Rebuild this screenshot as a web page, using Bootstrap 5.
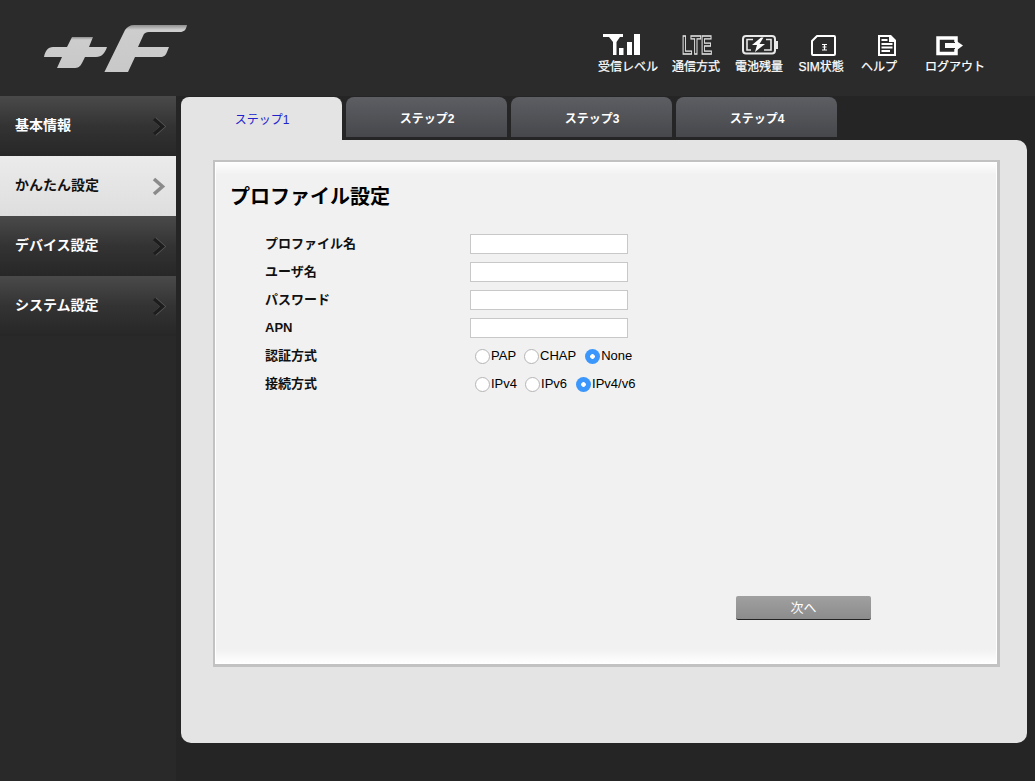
<!DOCTYPE html>
<html lang="ja">
<head>
<meta charset="utf-8">
<title>+F</title>
<link href="https://cdn.jsdelivr.net/npm/bootstrap@5.3.0/dist/css/bootstrap.min.css" rel="stylesheet">
<style>
html,body{height:100%;overflow:hidden}
body{background:#252525;font-family:"Liberation Sans","Noto Sans CJK JP",sans-serif;color:#000;font-size:13px}
.topbar{height:96px;background:#2b2b2b;padding-left:40px;padding-top:20px}
.logo{width:152px;height:52px;display:block}
.status-set{margin-left:406px;margin-top:12px;color:#fff}
.status-item{display:flex;flex-direction:column;align-items:center;font-size:12px;font-weight:400;line-height:16px;color:#fff;-webkit-text-stroke:.25px #fff;text-decoration:none}
.status-item svg{display:block;height:26px;margin-bottom:1px;overflow:visible}
.lte-icon{filter:grayscale(1)}
.lte-mark{font-family:"Liberation Sans",sans-serif;font-size:26px;font-weight:700;fill:#2b2b2b;stroke:#e4e4e4;stroke-width:1.400px;-webkit-text-stroke:0}
.s-gap14{margin-left:14px}.s-gap15{margin-left:15px}.s-gap17{margin-left:17px}.s-gap28{margin-left:28px}
.shell{height:685px}
.sidemenu{width:176px;background:#292929;flex:none;height:100%}
.side-link{height:60px;padding:0 10px 2px 15px;display:flex;align-items:center;justify-content:space-between;font-size:14px;font-weight:700;color:#fff;background:linear-gradient(#4a4a4a,#333 50%,#272727);border:0;border-radius:0;text-decoration:none}
.side-link.on{background:linear-gradient(#ebebeb,#dedede);color:#111}
.side-link svg{width:14px;height:21px;margin-top:2px}
.content{margin-left:5px;width:846px;height:647px}
.step-tabs{height:44px;padding-top:1px;gap:4px;border:0}
.step-tab{width:161px;height:40px;background:linear-gradient(#5d5e63,#47484c);color:#fff;font-weight:700;font-size:12px;border-radius:8px 8px 0 0;display:flex;align-items:center;justify-content:center;padding:4px 0 0 1px;text-decoration:none}
.step-tab.on{height:43px;background:#e4e4e4;color:#2222cc;font-weight:400;padding:2px 0 0 1px;border-radius:8px 8px 0 0}
.panel-outer{height:603px;background:#e4e4e4;border-radius:0 10px 10px 10px;padding:20px 27px 0 32px}
.panel-inner{height:507px;border:solid #c2c2c2;border-width:2px 3px 3px 2px;box-shadow:inset 0 0 0 1px #fff;background:linear-gradient(#fff,#f1f1f1 2.500%,#f1f1f1 97%,#fff);padding:22px 16px 0 16px}
.panel-title{font-size:20px;font-weight:700;margin:0 0 20px -1px;line-height:26px}
.form-line{height:28px;margin:0;display:flex;align-items:center;padding-left:34px}
.form-line-label{width:205px;font-weight:700;font-size:13px;color:#111;margin:0}
.text-field{width:158px;height:20px;padding:0 4px;border:1px solid #c8c8c8;border-radius:0;background:#fff;font-size:13px}
.opt-group{padding-left:5px;display:flex;align-items:center;font-size:13px}
.opt{display:flex;align-items:center;margin-right:8px}
.opt:nth-child(2){margin-right:9px}
.opt input{appearance:none;-webkit-appearance:none;width:15px;height:15px;margin:0 1px 0 0;border:1px solid #b5b5b5;border-radius:50%;background:#fff;flex:none}
.opt input:checked{border:0;background:radial-gradient(circle,#fff 0,#fff 2px,#3b97fb 2.600px)}
.btn-row{margin:198px 0 0 505px}
.next-btn{width:135px;height:24px;padding:0;border:0;border-bottom:1px solid #222;border-radius:2px;background:linear-gradient(#a0a0a0,#8c8c8c);color:#fff;font-size:13px;line-height:22px}
</style>
</head>
<body>
<header class="topbar d-flex align-items-start">
  <svg class="logo" viewBox="40 20 152 52" aria-hidden="true">
    <defs><linearGradient id="lg" x1="0" y1="0" x2="0" y2="1"><stop offset="0" stop-color="#8e8e8e"/><stop offset=".09" stop-color="#cdcdcd"/><stop offset="1" stop-color="#c8c8c8"/></linearGradient></defs>
    <path fill="url(#lg)" d="M187 25H134C130 25 127 27 125 30L101 79H116C122 79 125 77 128 72L135 57H160C164 57 166 55 167 52L169 47H138L143 36C144 33 146 32 149 32H180C184 32 186 30 187 25Z"/>
    <path fill="url(#lg)" d="M44 57C45 51 48 47 53 47H67L72 37H93L89 47H107C105 53 102 57 96 57H85L82 63C80 67 78 68 74 68H57L62 57Z"/>
  </svg>
  <nav class="status-set d-flex align-items-start">
    <a class="status-item" href="#">
      <svg width="60" height="26" viewBox="598 32 60 26"><path fill="#fff" d="M603 34H623V37H620L616.500 42V55H613V42L609 37H603Z"/><rect x="619" y="48" width="4.500" height="7" fill="#fff"/><rect x="627" y="42" width="5" height="13" fill="#fff"/><rect x="634" y="34" width="6" height="21" fill="#fff"/></svg>
      受信レベル</a>
    <a class="status-item s-gap14" href="#">
      <svg class="lte-icon" width="48" height="26" viewBox="672 32 48 26"><text class="lte-mark" x="682" y="54" textLength="30" lengthAdjust="spacingAndGlyphs">LTE</text></svg>
      通信方式</a>
    <a class="status-item s-gap15" href="#">
      <svg width="48" height="26" viewBox="735 32 48 26"><rect x="743" y="36" width="32" height="17.500" rx="3" fill="none" stroke="#e8e8e8" stroke-width="2"/><rect x="776" y="41" width="2" height="8" fill="#e8e8e8"/><path d="M753 39.500H747V50H751M766 39.500H771V50H764" fill="none" stroke="#e8e8e8" stroke-width="1.600"/><path fill="#fff" d="M761 37.500L752 45H757L755 52L765 44H759.500L763.500 37.500Z"/></svg>
      電池残量</a>
    <a class="status-item s-gap15" href="#">
      <svg width="46" height="26" viewBox="798 32 46 26"><path fill="none" stroke="#fff" stroke-width="2" stroke-linejoin="round" d="M817 36H834Q835 36 835 37V54Q835 55 834 55H813Q812 55 812 54V41Z"/><path fill="none" stroke="#fff" stroke-width="1.200" d="M822 44.500H827M824.500 44.500V50M822.500 47H826.500M822 50H827"/></svg>
      SIM状態</a>
    <a class="status-item s-gap17" href="#">
      <svg width="36" height="26" viewBox="861 32 36 26"><path fill="#fff" fill-rule="evenodd" d="M878 35H891L896 40V56H878ZM880 37V54H894V42H889V37Z"/><path fill="#fff" d="M881.500 39H887.500V41H881.500ZM881.500 43H892.500V45H881.500ZM881.500 46.500H892.500V48.500H881.500ZM881.500 50H890V52H881.500Z"/></svg>
      ヘルプ</a>
    <a class="status-item s-gap28" href="#">
      <svg width="60" height="26" viewBox="925 32 60 26"><path fill="none" stroke="#fff" stroke-width="3.500" d="M956 42V38H938V53.500H956V49"/><path fill="#fff" d="M945 43H955V40L963 45.500L955 51.500V48H945Z"/></svg>
      ログアウト</a>
  </nav>
</header>
<div class="shell d-flex">
  <aside class="sidemenu">
    <div class="list-group rounded-0">
      <a href="#" class="side-link">基本情報<svg viewBox="0 0 14 21"><path d="M2.500 3L11 10.500L2.500 18" fill="none" stroke="#555" stroke-width="4.500"/><path d="M2 3L10.500 10.500L2 18" fill="none" stroke="#1d1d1d" stroke-width="3.500"/></svg></a>
      <a href="#" class="side-link on">かんたん設定<svg viewBox="0 0 14 21"><path d="M2 3L10.500 10.500L2 18" fill="none" stroke="#8a8a8a" stroke-width="3.500"/></svg></a>
      <a href="#" class="side-link">デバイス設定<svg viewBox="0 0 14 21"><path d="M2.500 3L11 10.500L2.500 18" fill="none" stroke="#555" stroke-width="4.500"/><path d="M2 3L10.500 10.500L2 18" fill="none" stroke="#1d1d1d" stroke-width="3.500"/></svg></a>
      <a href="#" class="side-link">システム設定<svg viewBox="0 0 14 21"><path d="M2.500 3L11 10.500L2.500 18" fill="none" stroke="#555" stroke-width="4.500"/><path d="M2 3L10.500 10.500L2 18" fill="none" stroke="#1d1d1d" stroke-width="3.500"/></svg></a>
    </div>
  </aside>
  <main class="content">
    <div class="step-tabs d-flex align-items-start">
      <a href="#" class="step-tab on">ステップ1</a>
      <a href="#" class="step-tab">ステップ2</a>
      <a href="#" class="step-tab">ステップ3</a>
      <a href="#" class="step-tab">ステップ4</a>
    </div>
    <div class="panel-outer">
      <form class="panel-inner">
        <h1 class="panel-title">プロファイル設定</h1>
        <div class="form-line"><label class="form-line-label">プロファイル名</label><input class="text-field" type="text"></div>
        <div class="form-line"><label class="form-line-label">ユーザ名</label><input class="text-field" type="text"></div>
        <div class="form-line"><label class="form-line-label">パスワード</label><input class="text-field" type="password"></div>
        <div class="form-line"><label class="form-line-label">APN</label><input class="text-field" type="text"></div>
        <div class="form-line"><span class="form-line-label">認証方式</span>
          <div class="opt-group">
            <label class="opt"><input type="radio" name="a">PAP</label>
            <label class="opt"><input type="radio" name="a">CHAP</label>
            <label class="opt"><input type="radio" name="a" checked>None</label>
          </div></div>
        <div class="form-line"><span class="form-line-label">接続方式</span>
          <div class="opt-group">
            <label class="opt"><input type="radio" name="b">IPv4</label>
            <label class="opt"><input type="radio" name="b">IPv6</label>
            <label class="opt"><input type="radio" name="b" checked>IPv4/v6</label>
          </div></div>
        <div class="btn-row"><button type="button" class="btn next-btn">次へ</button></div>
      </form>
    </div>
  </main>
</div>
<script src="https://cdn.jsdelivr.net/npm/bootstrap@5.3.0/dist/js/bootstrap.bundle.min.js"></script>
</body>
</html>
